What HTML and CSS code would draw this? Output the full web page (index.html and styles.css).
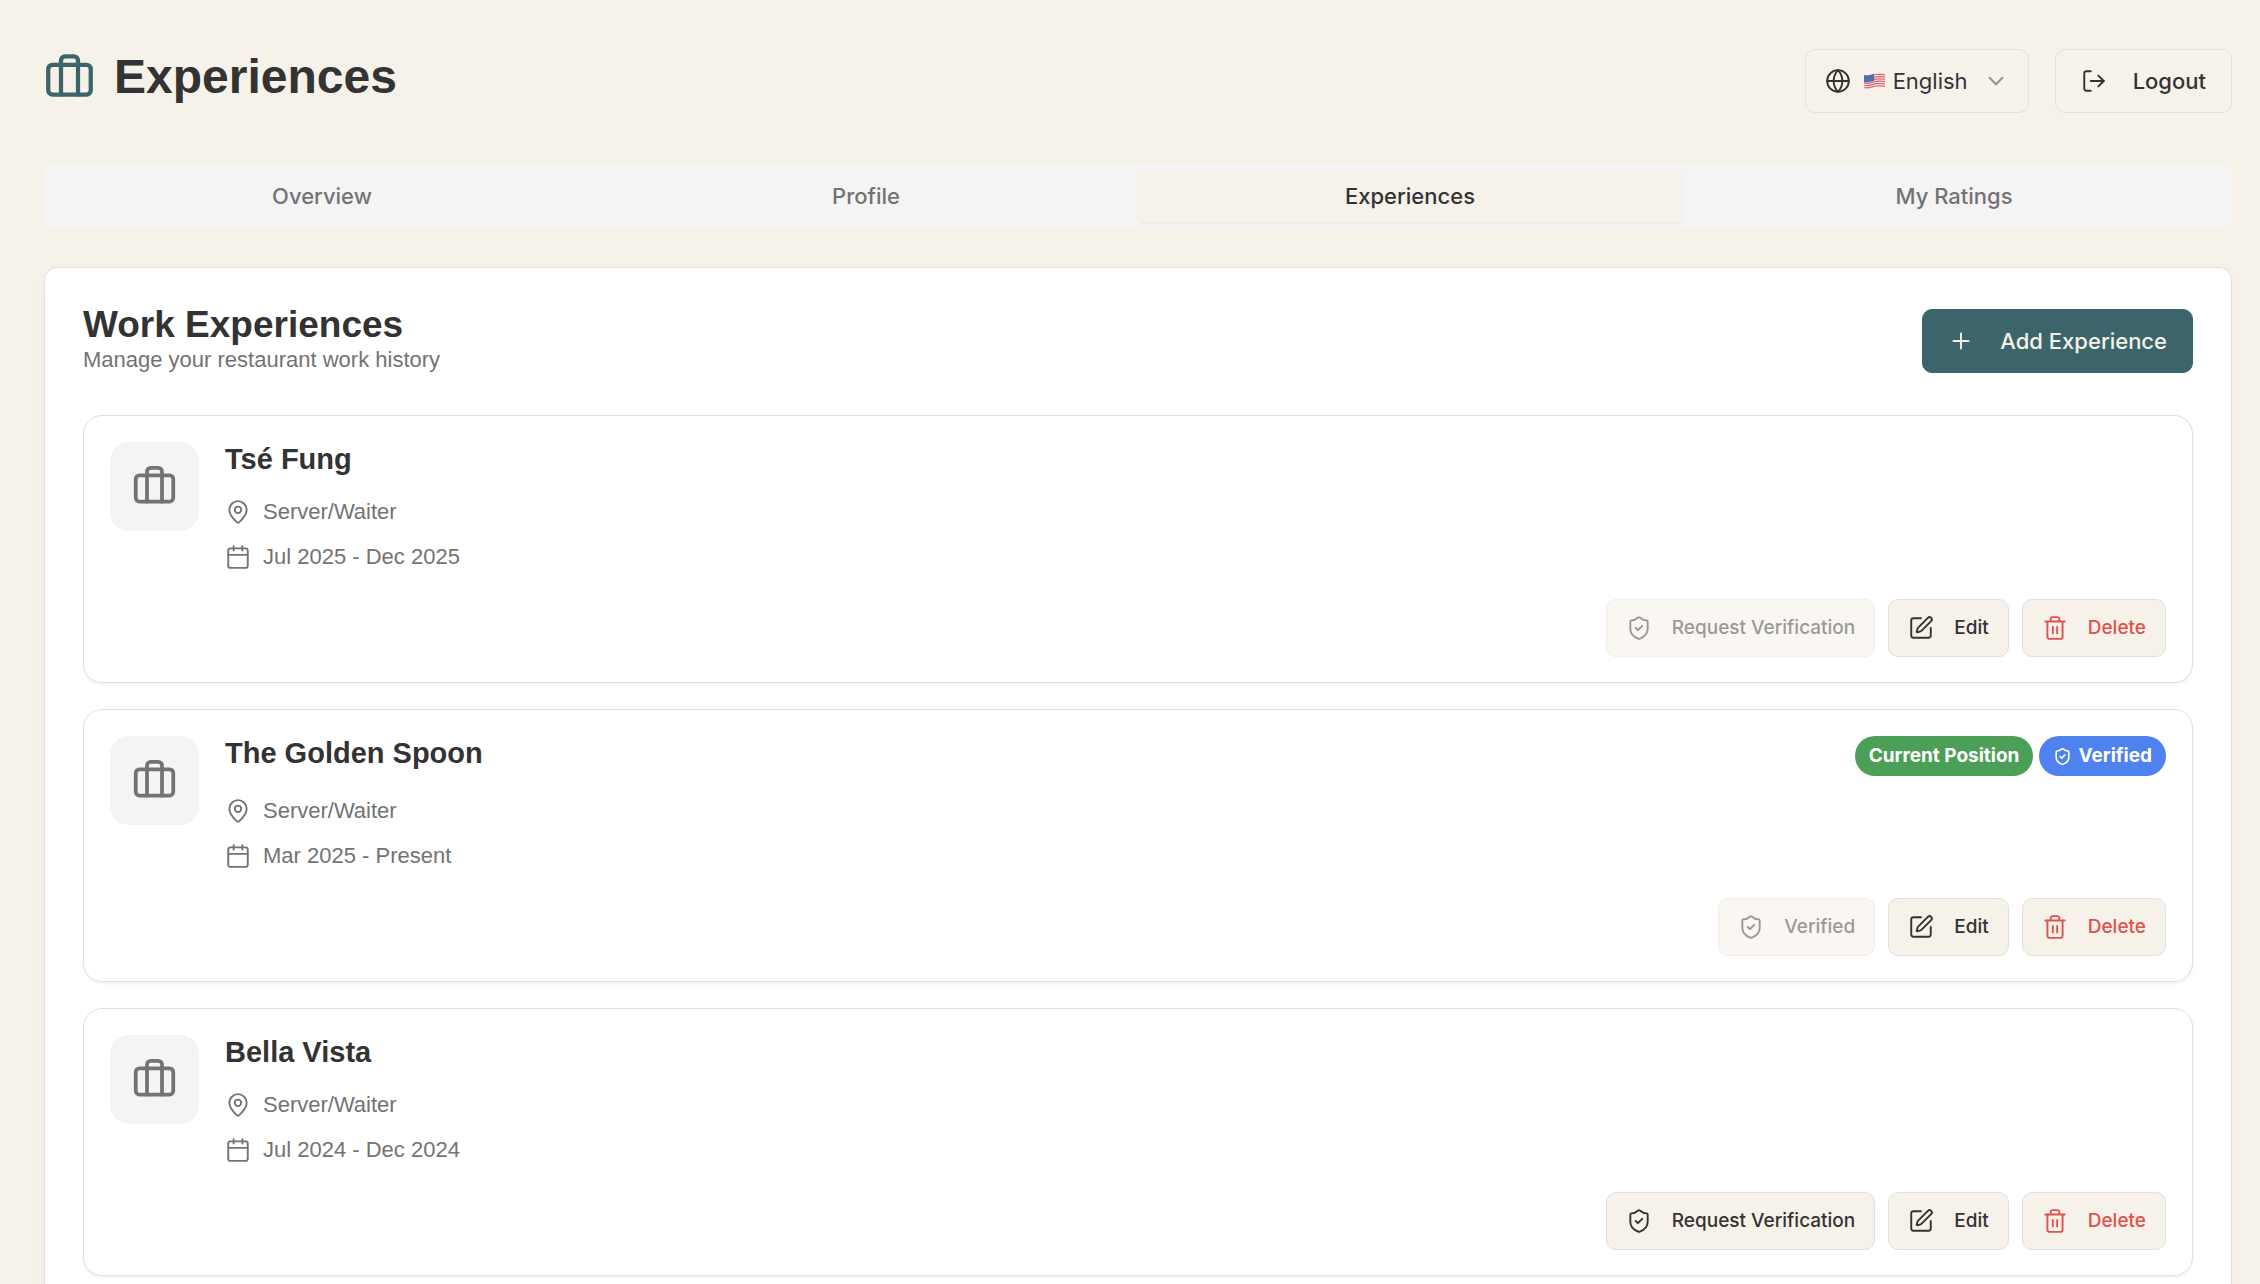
FILE: index.html
```html
<!DOCTYPE html>
<html lang="en">

<head>
    <meta charset="UTF-8">
    <meta name="viewport" content="width=device-width, initial-scale=1.0">
    <title>Experiences</title>
    <link rel="stylesheet" href="styles.css">
</head>

<body>
    <!-- Icon set -->
    <svg class="sprite" aria-hidden="true">
        <symbol id="briefcase" viewBox="0 0 24 24">
            <rect x="2" y="6" width="20" height="14" rx="2" />
            <path d="M16 20V4a2 2 0 0 0-2-2h-4a2 2 0 0 0-2 2v16" />
        </symbol>
        <symbol id="globe" viewBox="0 0 24 24">
            <circle cx="12" cy="12" r="10" />
            <path d="M12 2a14.5 14.5 0 0 0 0 20 14.5 14.5 0 0 0 0-20" />
            <path d="M2 12h20" />
        </symbol>
        <symbol id="chevron" viewBox="0 0 24 24">
            <path d="m6 9 6 6 6-6" />
        </symbol>
        <symbol id="logout" viewBox="0 0 24 24">
            <path d="M9 21H5a2 2 0 0 1-2-2V5a2 2 0 0 1 2-2h4" />
            <path d="m16 17 5-5-5-5" />
            <path d="M21 12H9" />
        </symbol>
        <symbol id="plus" viewBox="0 0 24 24">
            <path d="M5 12h14M12 5v14" />
        </symbol>
        <symbol id="pin" viewBox="0 0 24 24">
            <path d="M20 10c0 4.993-5.539 10.193-7.399 11.799a1 1 0 0 1-1.202 0C9.539 20.193 4 14.993 4 10a8 8 0 0 1 16 0" />
            <circle cx="12" cy="10" r="3" />
        </symbol>
        <symbol id="calendar" viewBox="0 0 24 24">
            <path d="M8 2v4M16 2v4M3 10h18" />
            <rect x="3" y="4" width="18" height="18" rx="2" />
        </symbol>
        <symbol id="shield" viewBox="0 0 24 24">
            <path d="M20 13c0 5-3.5 7.5-7.66 8.95a1 1 0 0 1-.67-.01C7.5 20.5 4 18 4 13V6a1 1 0 0 1 1-1c2 0 4.5-1.2 6.24-2.72a1.17 1.17 0 0 1 1.52 0C14.51 3.81 17 5 19 5a1 1 0 0 1 1 1z" />
            <path d="m9 12 2 2 4-4" />
        </symbol>
        <symbol id="pen" viewBox="0 0 24 24">
            <path d="M12 3H5a2 2 0 0 0-2 2v14a2 2 0 0 0 2 2h14a2 2 0 0 0 2-2v-7" />
            <path d="M18.375 2.625a1 1 0 0 1 3 3l-9.013 9.014a2 2 0 0 1-.853.505l-2.873.84a.5.5 0 0 1-.62-.62l.84-2.873a2 2 0 0 1 .506-.852z" />
        </symbol>
        <symbol id="trash" viewBox="0 0 24 24">
            <path d="M3 6h18M19 6v14c0 1-1 2-2 2H7c-1 0-2-1-2-2V6M8 6V4c0-1 1-2 2-2h4c1 0 2 1 2 2v2M10 11v6M14 11v6" />
        </symbol>
        <symbol id="flag" viewBox="0 0 21 16">
            <path fill="#f3e9ea" d="M0 2c5 1.500 8-1 12-1.500S18 .5 21 1v12c-4-1-7 0-10 1s-7 2-11 1z" />
            <path stroke="#dc6470" stroke-width="1.200" fill="none" d="M0 3c5 1.500 8-1 12-1.500s6-.2 9 .2M0 5.300c5 1.500 8-1 12-1.500s6-.2 9 .2M0 7.600c5 1.500 8-1 12-1.500s6-.2 9 .2M0 9.900c5 1.500 8-1 12-1.500s6-.2 9 .2M0 12.200c5 1.500 8-1 12-1.500s6-.2 9 .2M0 14.500c5 1.500 8-1 12-1.500s6-.2 9 .2" />
            <path fill="#4f6fae" d="M0 2c4 1.200 7-.5 10-1.200v7C7 8.500 4 10 0 9z" />
        </symbol>
    </svg>

    <div class="page">
        <header class="header">
            <div class="title">
                <svg class="title-icon"><use href="#briefcase" /></svg>
                <h1>Experiences</h1>
            </div>
            <div class="header-actions">
                <div class="language">
                    <svg class="icon"><use href="#globe" /></svg>
                    <svg class="flag"><use href="#flag" /></svg>
                    <select id="language" aria-label="Language">
                        <option selected>English</option>
                    </select>
                    <svg class="icon chevron"><use href="#chevron" /></svg>
                </div>
                <button type="button" class="btn btn-outline">
                    <svg class="icon"><use href="#logout" /></svg>
                    Logout
                </button>
            </div>
        </header>

        <nav class="tabs" role="tablist">
            <button type="button" class="tab" role="tab">Overview</button>
            <button type="button" class="tab" role="tab">Profile</button>
            <button type="button" class="tab active" role="tab" aria-selected="true">Experiences</button>
            <button type="button" class="tab" role="tab">My Ratings</button>
        </nav>

        <main class="panel">
            <div class="panel-header">
                <div>
                    <h2>Work Experiences</h2>
                    <p class="subtitle">Manage your restaurant work history</p>
                </div>
                <button type="button" class="btn btn-primary">
                    <svg class="icon"><use href="#plus" /></svg>
                    Add Experience
                </button>
            </div>

            <div class="list">
                <article class="card">
                    <div class="card-main">
                        <div class="avatar"><svg><use href="#briefcase" /></svg></div>
                        <div class="details">
                            <div class="card-top">
                                <h3>Tsé Fung</h3>
                            </div>
                            <p class="meta"><svg class="icon"><use href="#pin" /></svg>Server/Waiter</p>
                            <p class="meta"><svg class="icon"><use href="#calendar" /></svg>Jul 2025 - Dec 2025</p>
                        </div>
                    </div>
                    <div class="actions">
                        <button type="button" class="btn btn-small" disabled><svg class="icon"><use href="#shield" /></svg>Request Verification</button>
                        <button type="button" class="btn btn-small"><svg class="icon"><use href="#pen" /></svg>Edit</button>
                        <button type="button" class="btn btn-small delete"><svg class="icon"><use href="#trash" /></svg>Delete</button>
                    </div>
                </article>

                <article class="card">
                    <div class="card-main">
                        <div class="avatar"><svg><use href="#briefcase" /></svg></div>
                        <div class="details">
                            <div class="card-top">
                                <h3>The Golden Spoon</h3>
                                <div class="badges">
                                    <span class="badge current">Current Position</span>
                                    <span class="badge verified"><svg><use href="#shield" /></svg>Verified</span>
                                </div>
                            </div>
                            <p class="meta"><svg class="icon"><use href="#pin" /></svg>Server/Waiter</p>
                            <p class="meta"><svg class="icon"><use href="#calendar" /></svg>Mar 2025 - Present</p>
                        </div>
                    </div>
                    <div class="actions">
                        <button type="button" class="btn btn-small" disabled><svg class="icon"><use href="#shield" /></svg>Verified</button>
                        <button type="button" class="btn btn-small"><svg class="icon"><use href="#pen" /></svg>Edit</button>
                        <button type="button" class="btn btn-small delete"><svg class="icon"><use href="#trash" /></svg>Delete</button>
                    </div>
                </article>

                <article class="card">
                    <div class="card-main">
                        <div class="avatar"><svg><use href="#briefcase" /></svg></div>
                        <div class="details">
                            <div class="card-top">
                                <h3>Bella Vista</h3>
                            </div>
                            <p class="meta"><svg class="icon"><use href="#pin" /></svg>Server/Waiter</p>
                            <p class="meta"><svg class="icon"><use href="#calendar" /></svg>Jul 2024 - Dec 2024</p>
                        </div>
                    </div>
                    <div class="actions">
                        <button type="button" class="btn btn-small"><svg class="icon"><use href="#shield" /></svg>Request Verification</button>
                        <button type="button" class="btn btn-small"><svg class="icon"><use href="#pen" /></svg>Edit</button>
                        <button type="button" class="btn btn-small delete"><svg class="icon"><use href="#trash" /></svg>Delete</button>
                    </div>
                </article>
            </div>
        </main>
    </div>
</body>

</html>
```
FILE: styles.css
```css
/* styles.css */

* {
    box-sizing: border-box;
}

body {
    font-family: "Liberation Sans", Arial, sans-serif;
    font-size: 22px;
    line-height: 32px;
    margin: 0;
    background-color: #f6f1e9;
    color: #333333;
}

h1,
h2,
h3,
p {
    margin: 0;
}

svg {
    flex-shrink: 0;
    fill: none;
    stroke: currentColor;
    stroke-width: 2;
    stroke-linecap: round;
    stroke-linejoin: round;
}

.sprite {
    display: none;
}

.icon {
    width: 26px;
    height: 26px;
    stroke-width: 1.75;
}

.page {
    padding: 49px 28px 38px 44px;
}

/* Header */
.header {
    display: flex;
    justify-content: space-between;
    align-items: flex-start;
    margin-bottom: 51px;
}

.title {
    display: flex;
    align-items: center;
    gap: 19px;
}

.title-icon {
    width: 51px;
    height: 51px;
    color: #3b656a;
}

h1 {
    font-size: 48px;
    line-height: 56px;
}

.header-actions {
    display: flex;
    gap: 26px;
}

.language {
    display: flex;
    align-items: center;
    width: 224px;
    height: 64px;
    padding: 0 19px;
    border: 1px solid #e0e0e0;
    border-radius: 10px;
}

.flag {
    width: 21px;
    height: 16px;
    margin: 0 8px 0 13px;
    stroke: none;
}

.language select {
    flex: 1;
    min-width: 0;
    padding: 0;
    border: none;
    background: none;
    appearance: none;
    font: 400 22px/32px Inter, sans-serif;
    color: inherit;
}

.chevron {
    opacity: 0.5;
}

/* Buttons */
.btn {
    display: flex;
    align-items: center;
    gap: 26px;
    height: 64px;
    padding: 0 25px;
    border: 1px solid #e0e0e0;
    border-radius: 10px;
    background-color: #f6f1e9;
    color: #333333;
    font: 500 22px/32px Inter, sans-serif;
    cursor: pointer;
}

.btn-primary {
    border-color: #3b656a;
    background-color: #3b656a;
    color: #f6f1e9;
}

.btn-small {
    gap: 20px;
    height: 58px;
    padding: 0 19px;
    font-size: 19px;
}

.btn:disabled {
    opacity: 0.5;
    cursor: default;
}

.delete {
    color: #e0524d;
}

/* Tabs */
.tabs {
    display: flex;
    height: 64px;
    padding: 6px;
    margin-bottom: 39px;
    border-radius: 10px;
    background-color: #f4f4f4;
}

.tab {
    flex: 1;
    border: none;
    border-radius: 6px;
    background: none;
    color: #737373;
    font: 500 22px/32px Inter, sans-serif;
    cursor: pointer;
}

.tab.active {
    background-color: #f6f1e9;
    color: #333333;
    box-shadow: 0 2px 3px rgba(0, 0, 0, 0.05);
}

/* Work experiences */
.panel {
    padding: 38px;
    border: 1px solid #e0e0e0;
    border-radius: 13px;
    background-color: #ffffff;
    box-shadow: 0 4px 20px rgba(0, 0, 0, 0.02);
}

.panel-header {
    display: flex;
    justify-content: space-between;
    align-items: center;
    margin-bottom: 39px;
}

h2 {
    font-size: 37px;
    line-height: 38px;
}

.subtitle {
    color: #737373;
}

.list {
    display: flex;
    flex-direction: column;
    gap: 26px;
}

.card {
    padding: 26px 26px 25px;
    border: 1px solid #e0e0e0;
    border-radius: 19px;
    background-color: #ffffff;
    box-shadow: 0 2px 3px rgba(0, 0, 0, 0.05);
}

.card-main {
    display: flex;
    gap: 26px;
}

.avatar {
    display: flex;
    align-items: center;
    justify-content: center;
    width: 89px;
    height: 89px;
    border-radius: 19px;
    background-color: #f4f4f4;
    color: #737373;
}

.avatar svg {
    width: 45px;
    height: 45px;
}

.details {
    flex: 1;
}

.card-top {
    display: flex;
    justify-content: space-between;
    margin-bottom: 19px;
}

h3 {
    font-size: 29px;
    line-height: 35px;
}

.meta {
    display: flex;
    align-items: center;
    gap: 12px;
    color: #737373;
}

.meta + .meta {
    margin-top: 13px;
}

.badges {
    display: flex;
    gap: 6px;
}

.badge {
    display: flex;
    align-items: center;
    gap: 6px;
    height: 40px;
    padding: 0 14px;
    border-radius: 20px;
    color: #ffffff;
    font: 700 19px/26px Inter, sans-serif;
}

.badge svg {
    width: 19px;
    height: 19px;
}

.current {
    background-color: #4b9f56;
}

.verified {
    background-color: #4f82ee;
}

.actions {
    display: flex;
    justify-content: flex-end;
    gap: 13px;
    margin-top: 26px;
}
```
